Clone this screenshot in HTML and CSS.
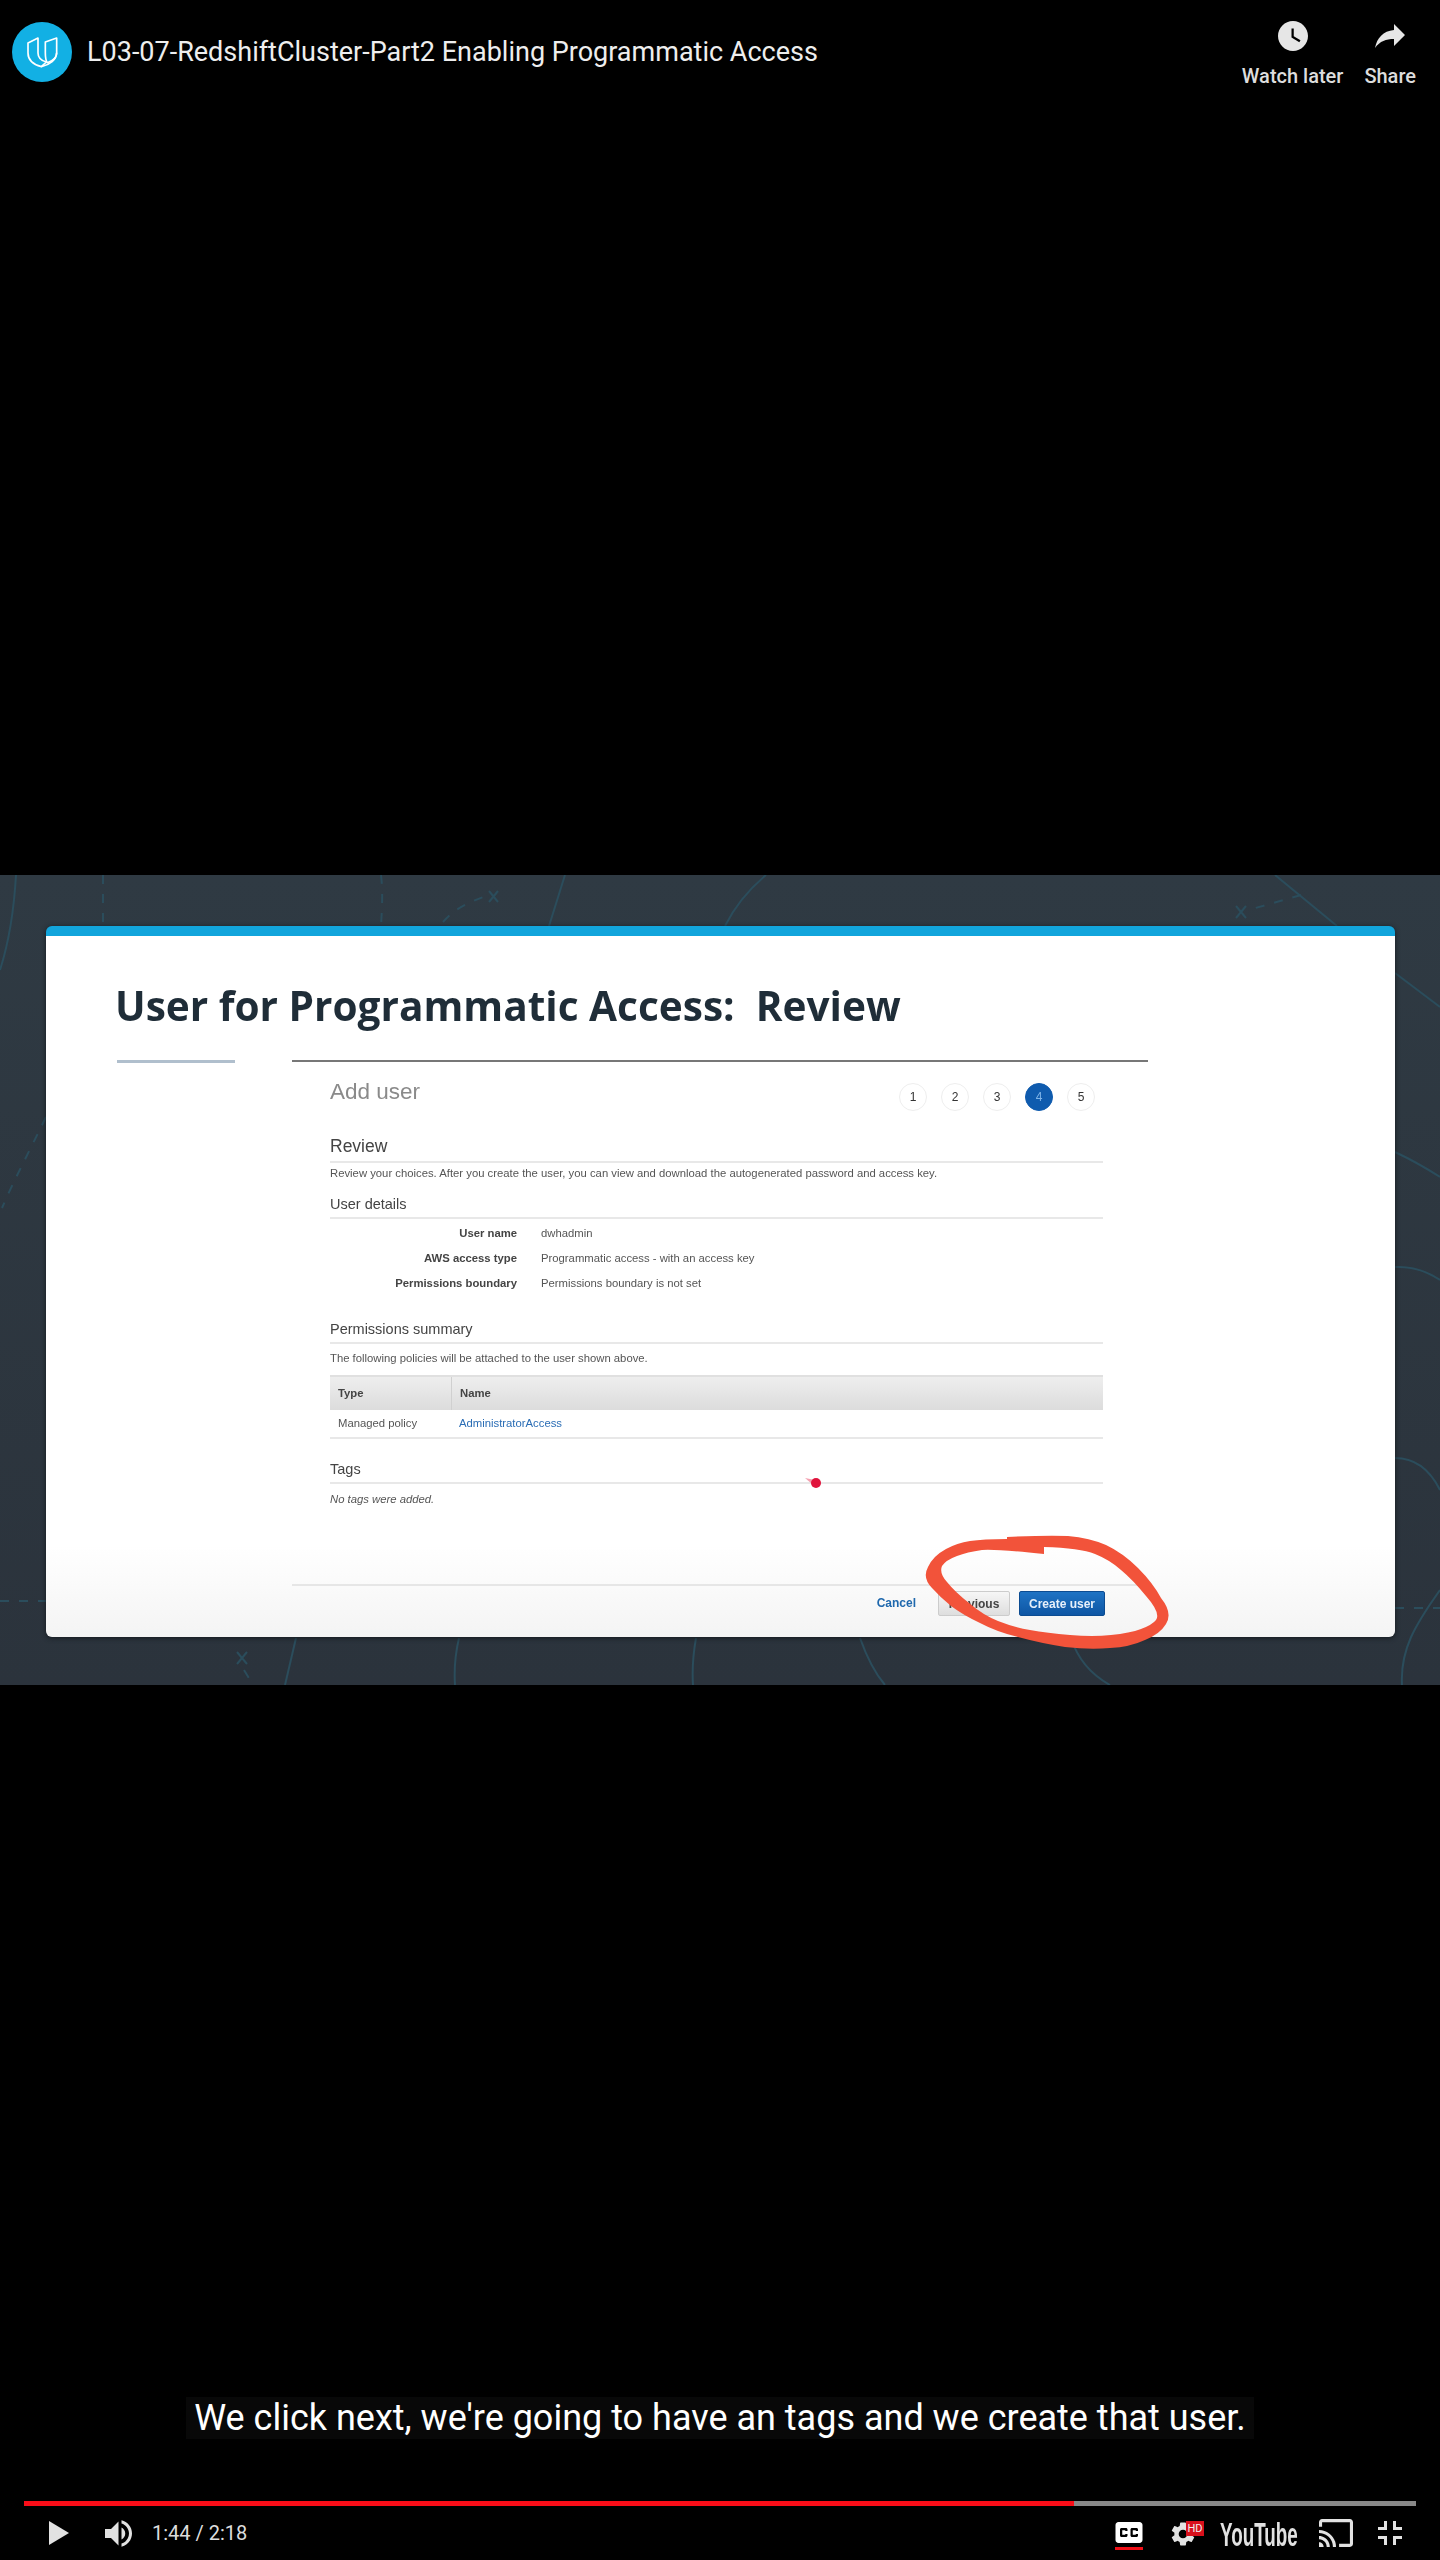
FILE: index.html
```html
<!DOCTYPE html>
<html lang="en">
  <head>
    <meta charset="utf-8">
    <title>L03-07-RedshiftCluster-Part2 Enabling Programmatic Access</title>
    <link rel="stylesheet" href="styles.css">
  </head>
  <body>
    <div class="player">
      <div class="topbar">
        <div class="channel">
          <svg class="logo" viewBox="0 0 180 180">
            <circle cx="90" cy="90" r="90" fill="#12b0e4"/>
            <path class="logo-u" d="M48 63 L78 48 V93 C78 106 88 116 103 120 L88 134 C66 128 48 116 48 93 Z"/>
            <path class="logo-u" d="M100 60 L134 48 V92 C134 106 124 116 106 122 C100 114 100 106 100 92 Z"/>
            <path class="logo-u" d="M134 92 C134 113 113 128 88 134"/>
          </svg>
          <span class="video-title">L03-07-RedshiftCluster-Part2 Enabling Programmatic Access</span>
        </div>
        <div class="top-actions">
          <div class="top-action action-later">
            <svg class="clock" viewBox="2 2 20 20"><path d="M12 2C6.5 2 2 6.5 2 12s4.5 10 10 10 10-4.5 10-10S17.5 2 12 2zm4.2 14.2L11 13V7h1.5v5.2l4.5 2.7-.8 1.3z"/></svg>
            <span>Watch later</span>
          </div>
          <div class="top-action">
            <svg class="share" viewBox="0 0 30 24"><path d="M19 0 L30 11 L19 22 V15 C11 15 5 17 0 24 C2 14 8 7 19 6 Z"/></svg>
            <span>Share</span>
          </div>
        </div>
      </div>

      <div class="frame">
        <svg class="frame-lines" viewBox="0 875 1440 810">
          <path d="M16 875 C14 910 8 945 0 970"/>
          <path class="dash" d="M103 875 V926"/>
          <path class="dash" d="M381 875 C383 890 382 910 381 926"/>
          <path d="M565 875 L549 926"/>
          <path class="dash" d="M443 922 C455 908 470 902 486 896"/>
          <path d="M489 891 L498 902 M498 891 L489 902"/>
          <path d="M766 875 C748 890 734 908 725 926"/>
          <path d="M1275 875 L1337 926"/>
          <path class="dash" d="M1301 895 L1252 909"/>
          <path d="M1236 906 L1246 918 M1246 906 L1236 918"/>
          <path d="M1395 973 L1440 1007"/>
          <path d="M1395 1152 C1412 1160 1426 1168 1440 1177"/>
          <path d="M1395 1267 C1412 1266 1428 1272 1440 1280"/>
          <path d="M1395 1458 C1415 1458 1430 1470 1440 1490"/>
          <path d="M1440 1590 C1415 1625 1400 1650 1402 1685"/>
          <path class="dash" d="M1395 1608 H1440"/>
          <path class="dash" d="M46 1117 C30 1150 14 1180 2 1208"/>
          <path class="dash" d="M0 1601 H46"/>
          <path d="M237 1652 L247 1664 M247 1652 L237 1664"/>
          <path class="dash" d="M244 1670 L252 1683"/>
          <path d="M296 1638 L285 1685"/>
          <path d="M459 1638 C455 1655 454 1670 455 1685"/>
          <path d="M696 1638 C693 1655 692 1670 693 1685"/>
          <path d="M860 1638 C866 1655 874 1672 885 1685"/>
          <path d="M1071 1638 C1078 1660 1092 1675 1110 1685"/>
        </svg>

        <div class="card">
          <h1 class="slide-title">User for Programmatic Access:&nbsp; Review</h1>
          <div class="rules">
            <div class="rule-short"></div>
            <div class="rule-long"></div>
          </div>
          <div class="wizard">
            <div class="wizard-body">
              <div class="wizard-head">
                <div class="add-user">Add user</div>
                <div class="steps">
                  <span class="step">1</span>
                  <span class="step">2</span>
                  <span class="step">3</span>
                  <span class="step step-on">4</span>
                  <span class="step">5</span>
                </div>
              </div>

              <h3 class="sec sec-review">Review</h3>
              <p class="desc desc-review">Review your choices. After you create the user, you can view and download the autogenerated password and access key.</p>

              <h3 class="sec sec-details">User details</h3>
              <div class="details">
                <div class="detail"><b>User name</b><span>dwhadmin</span></div>
                <div class="detail"><b>AWS access type</b><span>Programmatic access - with an access key</span></div>
                <div class="detail"><b>Permissions boundary</b><span>Permissions boundary is not set</span></div>
              </div>

              <h3 class="sec sec-perms">Permissions summary</h3>
              <p class="desc desc-perms">The following policies will be attached to the user shown above.</p>
              <div class="tbl-head">
                <div class="col-type">Type</div>
                <div class="col-name">Name</div>
              </div>
              <div class="tbl-row">
                <div class="col-type">Managed policy</div>
                <div class="col-name"><a class="link">AdministratorAccess</a></div>
              </div>

              <h3 class="sec sec-tags">Tags</h3>
              <p class="desc desc-tags"><i>No tags were added.</i></p>
            </div>
            <div class="wizard-foot">
              <a class="cancel">Cancel</a>
              <div class="btn btn-prev">Previous</div>
              <div class="btn btn-create">Create user</div>
            </div>
          </div>
        </div>

        <svg class="frame-marks" viewBox="0 875 1440 810">
          <path class="mark-tail" d="M805 1478 L815 1480 L812 1484 Z"/>
          <circle class="mark-dot" cx="816" cy="1483" r="5"/>
          <path class="mark-ring" fill-rule="evenodd" d="M1007 1537 Q1047 1535 1068 1536 Q1090 1538 1106 1545 Q1123 1553 1138 1568 Q1153 1583 1161 1598 Q1173 1613 1166 1624 Q1160 1634 1145 1640 Q1130 1647 1110 1648 Q1090 1650 1065 1647 Q1040 1643 1018 1637 Q997 1632 980 1623 Q963 1615 951 1606 Q940 1597 932 1588 Q922 1578 928 1567 Q933 1556 946 1549 Q957 1543 970 1541 Q983 1539 1007 1539 Z M1044 1554 V1547 Q1080 1548 1095 1554 Q1110 1560 1121 1570 Q1133 1580 1146 1596 Q1161 1613 1156 1620 Q1152 1625 1141 1629 Q1130 1633 1111 1635 Q1093 1637 1070 1635 Q1047 1633 1030 1630 Q1013 1627 998 1621 Q983 1615 969 1603 Q955 1592 947 1582 Q939 1573 942 1566 Q946 1560 957 1556 Q967 1552 982 1550 Q997 1549 1044 1554 Z"/>
        </svg>
      </div>

      <div class="lower">
        <div class="caption"><span>We click next, we're going to have an tags and we create that user.</span></div>
        <div class="progress">
          <div class="played"></div>
          <div class="rest"></div>
        </div>
        <div class="controls">
          <div class="controls-left">
            <svg class="play" viewBox="0 0 20 24"><polygon points="0,0 20,12 0,24"/></svg>
            <svg class="volume" viewBox="8 9 18 18"><path d="M8,21 L12,21 L17,26 L17,10 L12,15 L8,15 L8,21 Z M19,14 L19,22 C20.48,21.32 21.5,19.77 21.5,18 C21.5,16.26 20.48,14.74 19,14 Z M19,11.29 C21.89,12.15 24,14.83 24,18 C24,21.17 21.89,23.85 19,24.71 L19,26.77 C23.01,25.86 26,22.28 26,18 C26,13.72 23.01,10.14 19,9.23 L19,11.29 Z"/></svg>
            <span class="time">1:44 / 2:18</span>
          </div>
          <div class="controls-right">
            <div class="cc">
              <svg class="cc-icon" viewBox="9 11 18 14"><path fill-rule="evenodd" d="M11,11 C9.89,11 9,11.9 9,13 L9,23 C9,24.1 9.89,25 11,25 L25,25 C26.1,25 27,24.1 27,23 L27,13 C27,11.9 26.1,11 25,11 L11,11 Z M17,17 L15.5,17 L15.5,16.5 L13.5,16.5 L13.5,19.5 L15.5,19.5 L15.5,19 L17,19 L17,20 C17,20.55 16.55,21 16,21 L13,21 C12.45,21 12,20.55 12,20 L12,16 C12,15.45 12.45,15 13,15 L16,15 C16.55,15 17,15.45 17,16 L17,17 Z M24,17 L22.5,17 L22.5,16.5 L20.5,16.5 L20.5,19.5 L22.5,19.5 L22.5,19 L24,19 L24,20 C24,20.55 23.55,21 23,21 L20,21 C19.45,21 19,20.55 19,20 L19,16 C19,15.45 19.45,15 20,15 L23,15 C23.55,15 24,15.45 24,16 L24,17 Z"/></svg>
              <div class="cc-on"></div>
            </div>
            <div class="gear">
              <svg class="gear-icon" viewBox="2.5 2 19 20"><path d="M19.14 12.94c.04-.3.06-.61.06-.94 0-.32-.02-.64-.07-.94l2.03-1.58c.18-.14.23-.41.12-.61l-1.92-3.32c-.12-.22-.37-.29-.59-.22l-2.39.96c-.5-.38-1.03-.7-1.62-.94l-.36-2.54c-.04-.24-.24-.41-.48-.41h-3.84c-.24 0-.43.17-.47.41l-.36 2.54c-.59.24-1.13.57-1.62.94l-2.39-.96c-.22-.08-.47 0-.59.22L2.74 8.87c-.12.21-.08.47.12.61l2.03 1.58c-.05.3-.09.63-.09.94s.02.64.07.94l-2.03 1.58c-.18.14-.23.41-.12.61l1.92 3.32c.12.22.37.29.59.22l2.39-.96c.5.38 1.03.7 1.62.94l.36 2.54c.05.24.24.41.48.41h3.84c.24 0 .44-.17.47-.41l.36-2.54c.59-.24 1.13-.56 1.62-.94l2.39.96c.22.08.47 0 .59-.22l1.92-3.32c.12-.22.07-.47-.12-.61l-2.01-1.58zM12 15.6c-1.98 0-3.6-1.62-3.6-3.6s1.62-3.6 3.6-3.6 3.6 1.62 3.6 3.6-1.62 3.6-3.6 3.6z"/></svg>
              <span class="hd">HD</span>
            </div>
            <div class="yt-word"><span>YouTube</span></div>
            <svg class="cast" viewBox="7 10 22 18"><path d="M27 10H9c-1.1 0-2 .9-2 2v3h2v-3h18v14h-7v2h7c1.1 0 2-.9 2-2V12c0-1.1-.9-2-2-2zM7 25v3h3c0-1.66-1.34-3-3-3zm0-4v2c2.76 0 5 2.24 5 5h2c0-3.87-3.13-7-7-7zm0-4v2c4.97 0 9 4.03 9 9h2c0-6.08-4.93-11-11-11z"/></svg>
            <svg class="exit-full" viewBox="10 10 16 16"><path d="M14 14h-4v2h6v-6h-2zM22 14v-4h-2v6h6v-2zM20 26h2v-4h4v-2h-6zM10 22h4v4h2v-6h-6z"/></svg>
          </div>
        </div>
      </div>
    </div>
  </body>
</html>
```

FILE: styles.css
```css
* {
  box-sizing: border-box;
}
html, body {
  margin: 0;
  background: #000;
}
.player {
  width: 1440px;
  height: 2560px;
  display: flex;
  flex-direction: column;
  font-family: Roboto, sans-serif;
  overflow: hidden;
}

/* title bar */
.topbar {
  height: 875px;
  display: flex;
  justify-content: space-between;
  align-items: flex-start;
  padding: 22px 24px 0 12px;
}
.channel {
  display: flex;
  align-items: center;
}
.logo {
  width: 60px;
  height: 60px;
  margin-right: 15px;
}
.logo-u {
  fill: none;
  stroke: #fff;
  stroke-width: 5;
  stroke-linejoin: round;
}
.video-title {
  font-size: 27px;
  color: #eee;
}
.top-actions {
  display: flex;
  gap: 21px;
}
.top-action {
  display: flex;
  flex-direction: column;
  align-items: center;
  color: #ddd;
  font-size: 20px;
  font-weight: 500;
}
.top-action svg {
  fill: #e6e6e6;
  display: block;
}
.clock {
  width: 30px;
  height: 30px;
  margin-top: -1px;
  margin-bottom: 13px;
}
.share {
  width: 30px;
  height: 24px;
  margin-top: 2px;
  margin-bottom: 16px;
}

/* video frame */
.frame {
  height: 810px;
  position: relative;
  padding: 51px 45px 48px 46px;
  background: linear-gradient(180deg, #2f3a43, #2b333c);
  display: flex;
}
.frame-lines, .frame-marks {
  position: absolute;
  left: 0;
  top: 0;
  width: 1440px;
  height: 810px;
}
.frame-lines path {
  fill: none;
  stroke: #2b4d5c;
  stroke-width: 2;
}
.frame-lines .dash {
  stroke-dasharray: 9 10;
}
.mark-ring {
  fill: #f2533a;
}
.mark-dot {
  fill: #e0143c;
}
.mark-tail {
  fill: #f4a0b0;
}
.card {
  position: relative;
  flex: 1;
  display: flex;
  flex-direction: column;
  border-top: 10px solid #12a5dc;
  border-radius: 6px;
  background: linear-gradient(180deg, #fff 0, #fff 610px, #f4f4f4 100%);
  box-shadow: 0 1px 5px #14191e;
  padding-left: 69px;
  filter: blur(0.35px);
}
.slide-title {
  margin: 40px 0 0;
  height: 60px;
  line-height: 60px;
  font-family: "Open Sans", sans-serif;
  font-size: 40.6px;
  font-weight: 700;
  color: #1f2d38;
  white-space: nowrap;
}
.rules {
  display: flex;
  align-items: flex-start;
  height: 2px;
  margin-left: 2px;
  margin-top: 24px;
}
.rule-short {
  width: 118px;
  height: 3px;
  background: #b0bfcd;
  margin-right: 57px;
}
.rule-long {
  width: 856px;
  height: 2px;
  background: #777;
}
.wizard {
  flex: 1;
  margin-left: 177px;
  width: 856px;
  display: flex;
  flex-direction: column;
  font-family: "Liberation Sans", Arial, sans-serif;
  color: #444;
}
.wizard-body {
  padding-left: 38px;
  width: 811px;
}
.wizard-head {
  display: flex;
  justify-content: space-between;
  padding: 21px 8px 0 0;
}
.add-user {
  font-size: 22.5px;
  line-height: 24px;
  margin-top: -3px;
  color: #8a8a8a;
}
.steps {
  display: flex;
  gap: 14px;
}
.step {
  width: 28px;
  height: 28px;
  border: 1px solid #eee;
  border-radius: 50%;
  font-size: 12px;
  line-height: 26px;
  text-align: center;
  color: #333;
}
.step-on {
  background: #0f5bae;
  border-color: #0f5bae;
  color: #7fb4e8;
}
.sec {
  margin: 0;
  height: 26px;
  line-height: 22px;
  font-size: 14.5px;
  font-weight: 400;
  color: #444;
  border-bottom: 2px solid #e8e8e8;
}
.sec-review {
  margin-top: 26px;
  font-size: 17.5px;
  line-height: 18px;
}
.sec-details {
  margin-top: 10px;
}
.sec-perms {
  margin-top: 22px;
}
.sec-tags {
  margin-top: 19px;
}
.desc {
  margin: 0;
  font-size: 11.3px;
  color: #555;
}
.desc-review {
  line-height: 20px;
}
.desc-perms {
  line-height: 28px;
  margin-bottom: 3px;
}
.desc-tags {
  line-height: 30px;
}
.details {
  margin-top: 2px;
  margin-bottom: 0;
}
.detail {
  display: flex;
  height: 25px;
  line-height: 25px;
  font-size: 11.3px;
  color: #555;
}
.detail b {
  width: 187px;
  margin-right: 24px;
  text-align: right;
  color: #444;
}
.tbl-head, .tbl-row {
  display: flex;
  font-size: 11.3px;
}
.tbl-head {
  height: 35px;
  line-height: 33px;
  font-weight: 700;
  color: #444;
  background: linear-gradient(180deg, #eee, #dcdcdc);
  border-top: 2px solid #e0e0e0;
}
.tbl-head .col-name {
  border-left: 1px solid #d0d0d0;
}
.tbl-row {
  height: 29px;
  line-height: 27px;
  color: #555;
  border-bottom: 2px solid #e8e8e8;
}
.col-type {
  width: 121px;
  padding-left: 8px;
}
.col-name {
  flex: 1;
  padding-left: 8px;
}
.link {
  color: #2a6db5;
}
.wizard-foot {
  margin-top: auto;
  height: 53px;
  border-top: 2px solid #e6e6e6;
  padding: 5px 43px 0 0;
  display: flex;
  justify-content: flex-end;
  font-size: 12px;
  font-weight: 700;
}
.cancel {
  color: #1f68ad;
  line-height: 25px;
  margin-right: 22px;
}
.btn {
  height: 25px;
  line-height: 24px;
  text-align: center;
  border-radius: 2px;
}
.btn-prev {
  width: 72px;
  margin-right: 9px;
  color: #444;
  background: linear-gradient(180deg, #f6f6f6, #dedede);
  border: 1px solid #ccc;
}
.btn-create {
  width: 86px;
  color: #e8f0fa;
  background: linear-gradient(180deg, #1f73c4, #0e56a4);
  border: 1px solid #0c4c92;
}

/* caption, scrubber, controls */
.lower {
  flex: 1;
  display: flex;
  flex-direction: column;
}
.caption {
  margin-top: 712px;
  height: 42px;
  display: flex;
  justify-content: center;
}
.caption span {
  padding: 0 8px;
  background: #080808;
  color: #fff;
  font-size: 36px;
  line-height: 42px;
  white-space: nowrap;
}
.progress {
  display: flex;
  height: 5px;
  margin: 62px 24px 0;
}
.played {
  width: 1050px;
  background: #fa0d18;
}
.rest {
  flex: 1;
  background: #888;
}
.controls {
  flex: 1;
  display: flex;
  justify-content: space-between;
  padding: 15px 38px 0 49px;
}
.controls svg {
  fill: #e2e2e2;
  display: block;
}
.controls-left {
  display: flex;
  align-items: flex-start;
}
.play {
  width: 20px;
  height: 24px;
  margin-right: 36px;
}
.volume {
  width: 27px;
  height: 27px;
  margin-top: -1px;
  margin-right: 20px;
}
.time {
  font-size: 20px;
  line-height: 24px;
  color: #ddd;
}
.controls-right {
  display: flex;
  align-items: flex-start;
}
.cc {
  width: 28px;
  margin-right: 28px;
  margin-top: 1px;
}
.controls .cc-icon {
  width: 28px;
  height: 21px;
  fill: #fff;
}
.cc-on {
  height: 3px;
  margin-top: 4px;
  background: #f01018;
}
.gear {
  position: relative;
  width: 24px;
  height: 24px;
  margin-right: 25px;
  margin-top: 1px;
}
.gear-icon {
  width: 24px;
  height: 24px;
}
.hd {
  position: absolute;
  left: 15px;
  top: -1px;
  width: 18px;
  height: 15px;
  background: #d8101c;
  color: #eee;
  font-size: 11px;
  line-height: 15px;
  text-align: center;
}
.yt-word {
  width: 78px;
  height: 25px;
  margin-top: 1px;
  margin-right: 21px;
  font-family: "Liberation Sans", sans-serif;
  font-weight: 700;
  font-size: 33px;
  line-height: 25px;
  color: #e2e2e2;
  white-space: nowrap;
}
.yt-word span {
  display: inline-block;
  transform: scaleX(0.57);
  transform-origin: left center;
}
.cast {
  width: 34px;
  height: 28px;
  margin-top: -2px;
  margin-right: 25px;
}
.exit-full {
  width: 24px;
  height: 24px;
}
```
